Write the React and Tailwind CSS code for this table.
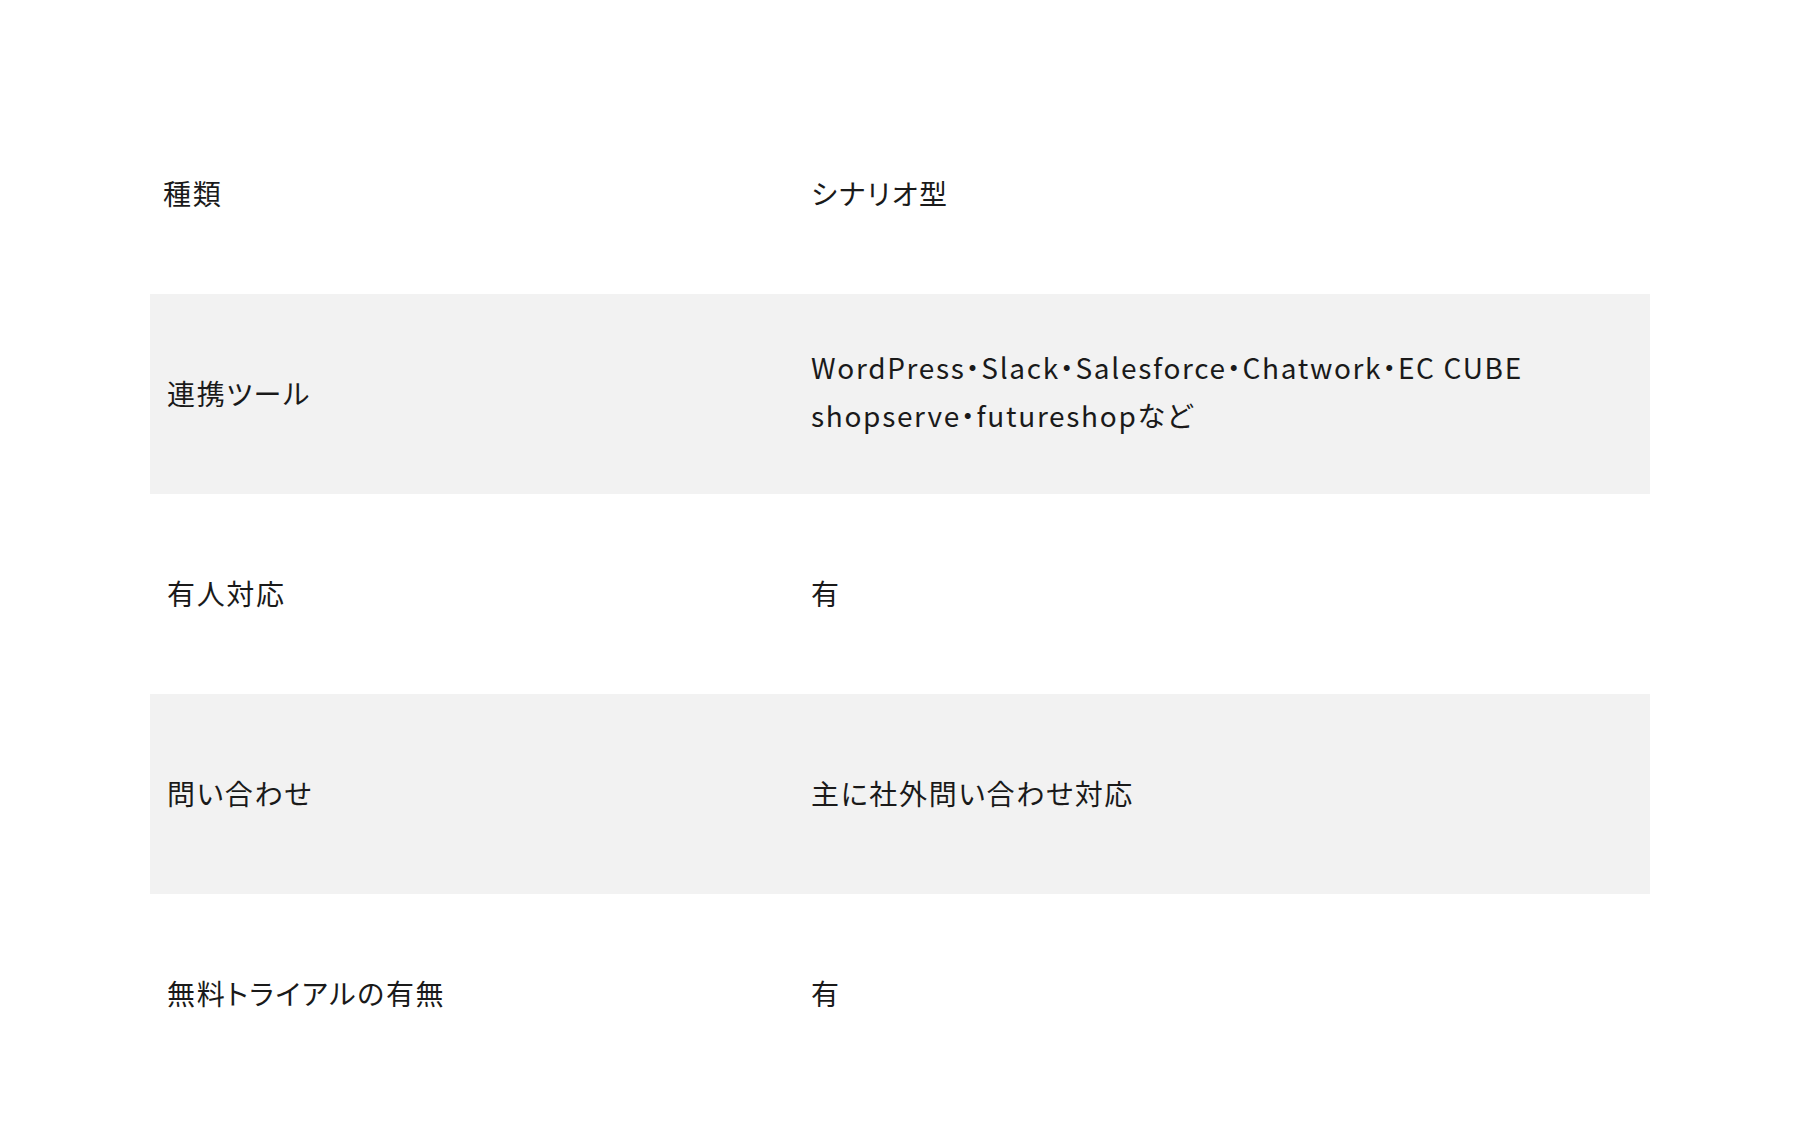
import React from 'react';

const ROWS = [
  { label: '種類', value: ['シナリオ型'] },
  {
    label: '連携ツール',
    value: ['WordPress・Slack・Salesforce・Chatwork・EC CUBE', 'shopserve・futureshopなど'],
  },
  { label: '有人対応', value: ['有'] },
  { label: '問い合わせ', value: ['主に社外問い合わせ対応'] },
  { label: '無料トライアルの有無', value: ['有'] },
];

export default function App() {
  return (
    <div className="min-h-[1138px] w-full bg-white px-[150px] pt-[94px] font-['Noto_Sans_CJK_JP','Noto_Sans',sans-serif] text-[#1a1a1a] [font-feature-settings:'palt']">
      <div className="flex flex-col">
        {ROWS.map((row, i) => (
          <div
            key={row.label}
            className={`grid h-[200px] grid-cols-[643px_1fr] items-center ${i % 2 === 1 ? 'bg-[#f2f2f2]' : ''}`}
          >
            <div className={`${i === 0 ? 'pl-[13px]' : 'pl-[17px]'} pb-[2px] text-[28px] leading-[48px] tracking-[0.06em]`}>
              {row.label}
            </div>
            <div className={`pl-[18px] ${row.value.length > 1 ? 'pb-[7px]' : 'pb-[2px]'} text-[28px] leading-[48px] tracking-[0.06em]`}>
              {row.value.map((line) => (
                <p key={line}>{line}</p>
              ))}
            </div>
          </div>
        ))}
      </div>
    </div>
  );
}
